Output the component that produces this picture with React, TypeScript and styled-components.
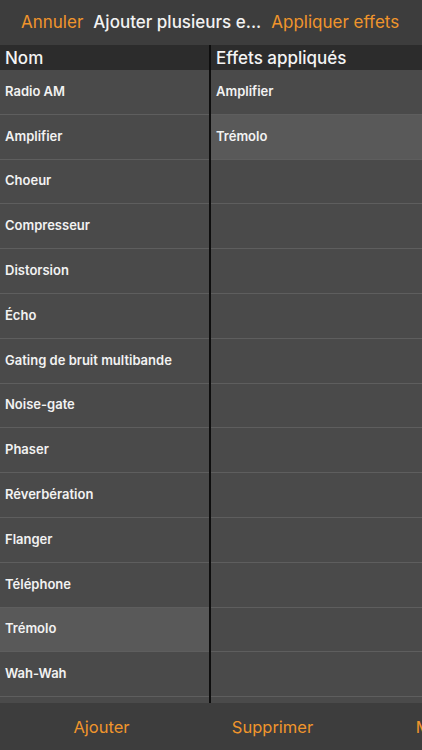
import styled, { createGlobalStyle } from "styled-components";

const GlobalStyle = createGlobalStyle`
  html, body {
    margin: 0;
    padding: 0;
    background: #3d3d3d;
    font-family: Inter, "Liberation Sans", Arial, sans-serif;
  }
`;

const effects = [
  "Radio AM",
  "Amplifier",
  "Choeur",
  "Compresseur",
  "Distorsion",
  "Écho",
  "Gating de bruit multibande",
  "Noise-gate",
  "Phaser",
  "Réverbération",
  "Flanger",
  "Téléphone",
  "Trémolo",
  "Wah-Wah",
  "",
];

const applied = ["Amplifier", "Trémolo"];
const selectedLeft = "Trémolo";
const selectedRight = "Trémolo";

export default function App() {
  const rightRows = [...applied];
  while (rightRows.length < effects.length) rightRows.push("");

  return (
    <>
      <GlobalStyle />
      <Screen>
        <NavBar>
          <NavButton>Annuler</NavButton>
          <NavTitle>Ajouter plusieurs e...</NavTitle>
          <NavButton>Appliquer effets</NavButton>
        </NavBar>
        <Table>
          <Column $width={209}>
            <HeaderCell>Nom</HeaderCell>
            {effects.map((name, i) => (
              <Row key={i} $selected={name !== "" && name === selectedLeft}>
                {name}
              </Row>
            ))}
          </Column>
          <Divider />
          <Column $width={211}>
            <HeaderCell>Effets appliqués</HeaderCell>
            {rightRows.map((name, i) => (
              <Row key={i} $selected={name !== "" && name === selectedRight}>
                {name}
              </Row>
            ))}
          </Column>
        </Table>
        <Toolbar>
          <ToolButton>Ajouter</ToolButton>
          <ToolButton>Supprimer</ToolButton>
          <ToolButton>Monter</ToolButton>
        </Toolbar>
      </Screen>
    </>
  );
}

const Screen = styled.div`
  width: 422px;
  height: 750px;
  overflow: hidden;
  display: flex;
  flex-direction: column;
  background: #3d3d3d;
`;

const NavBar = styled.div`
  height: 45px;
  flex-shrink: 0;
  box-sizing: border-box;
  display: flex;
  align-items: center;
  gap: 10px;
  padding: 0 0 1px 21px;
  background: #3d3d3d;
  white-space: nowrap;
`;

const NavButton = styled.span`
  color: #f0952c;
  font-size: 17px;
`;

const NavTitle = styled.span`
  color: #f2f2f2;
  font-size: 17px;
  font-weight: 500;
`;

const Table = styled.div`
  height: 658px;
  flex-shrink: 0;
  display: flex;
  overflow: hidden;
`;

const Column = styled.div<{ $width: number }>`
  width: ${(p) => p.$width}px;
  flex-shrink: 0;
  display: flex;
  flex-direction: column;
  background: #4a4a4a;
`;

const Divider = styled.div`
  width: 2px;
  flex-shrink: 0;
  background: #0e0e0e;
`;

const HeaderCell = styled.div`
  height: 25px;
  flex-shrink: 0;
  display: flex;
  align-items: center;
  padding-left: 5px;
  background: #2c2c2c;
  color: #f4f4f4;
  font-size: 17px;
  font-weight: 500;
  white-space: nowrap;
`;

const Row = styled.div<{ $selected: boolean }>`
  height: 44.8px;
  flex-shrink: 0;
  box-sizing: border-box;
  display: flex;
  align-items: center;
  padding: 0 0 2px 5px;
  border-bottom: 1px solid #5e5e5e;
  background: ${(p) => (p.$selected ? "#595959" : "#4a4a4a")};
  color: #f2f2f2;
  font-size: 13px;
  font-weight: 600;
  white-space: nowrap;
`;

const Toolbar = styled.div`
  flex: 1;
  display: grid;
  grid-template-columns: repeat(3, 171px);
  padding-left: 16px;
  align-items: center;
  background: #3d3d3d;
  white-space: nowrap;
`;

const ToolButton = styled.span`
  color: #f0952c;
  font-size: 16.5px;
  text-align: center;
`;
